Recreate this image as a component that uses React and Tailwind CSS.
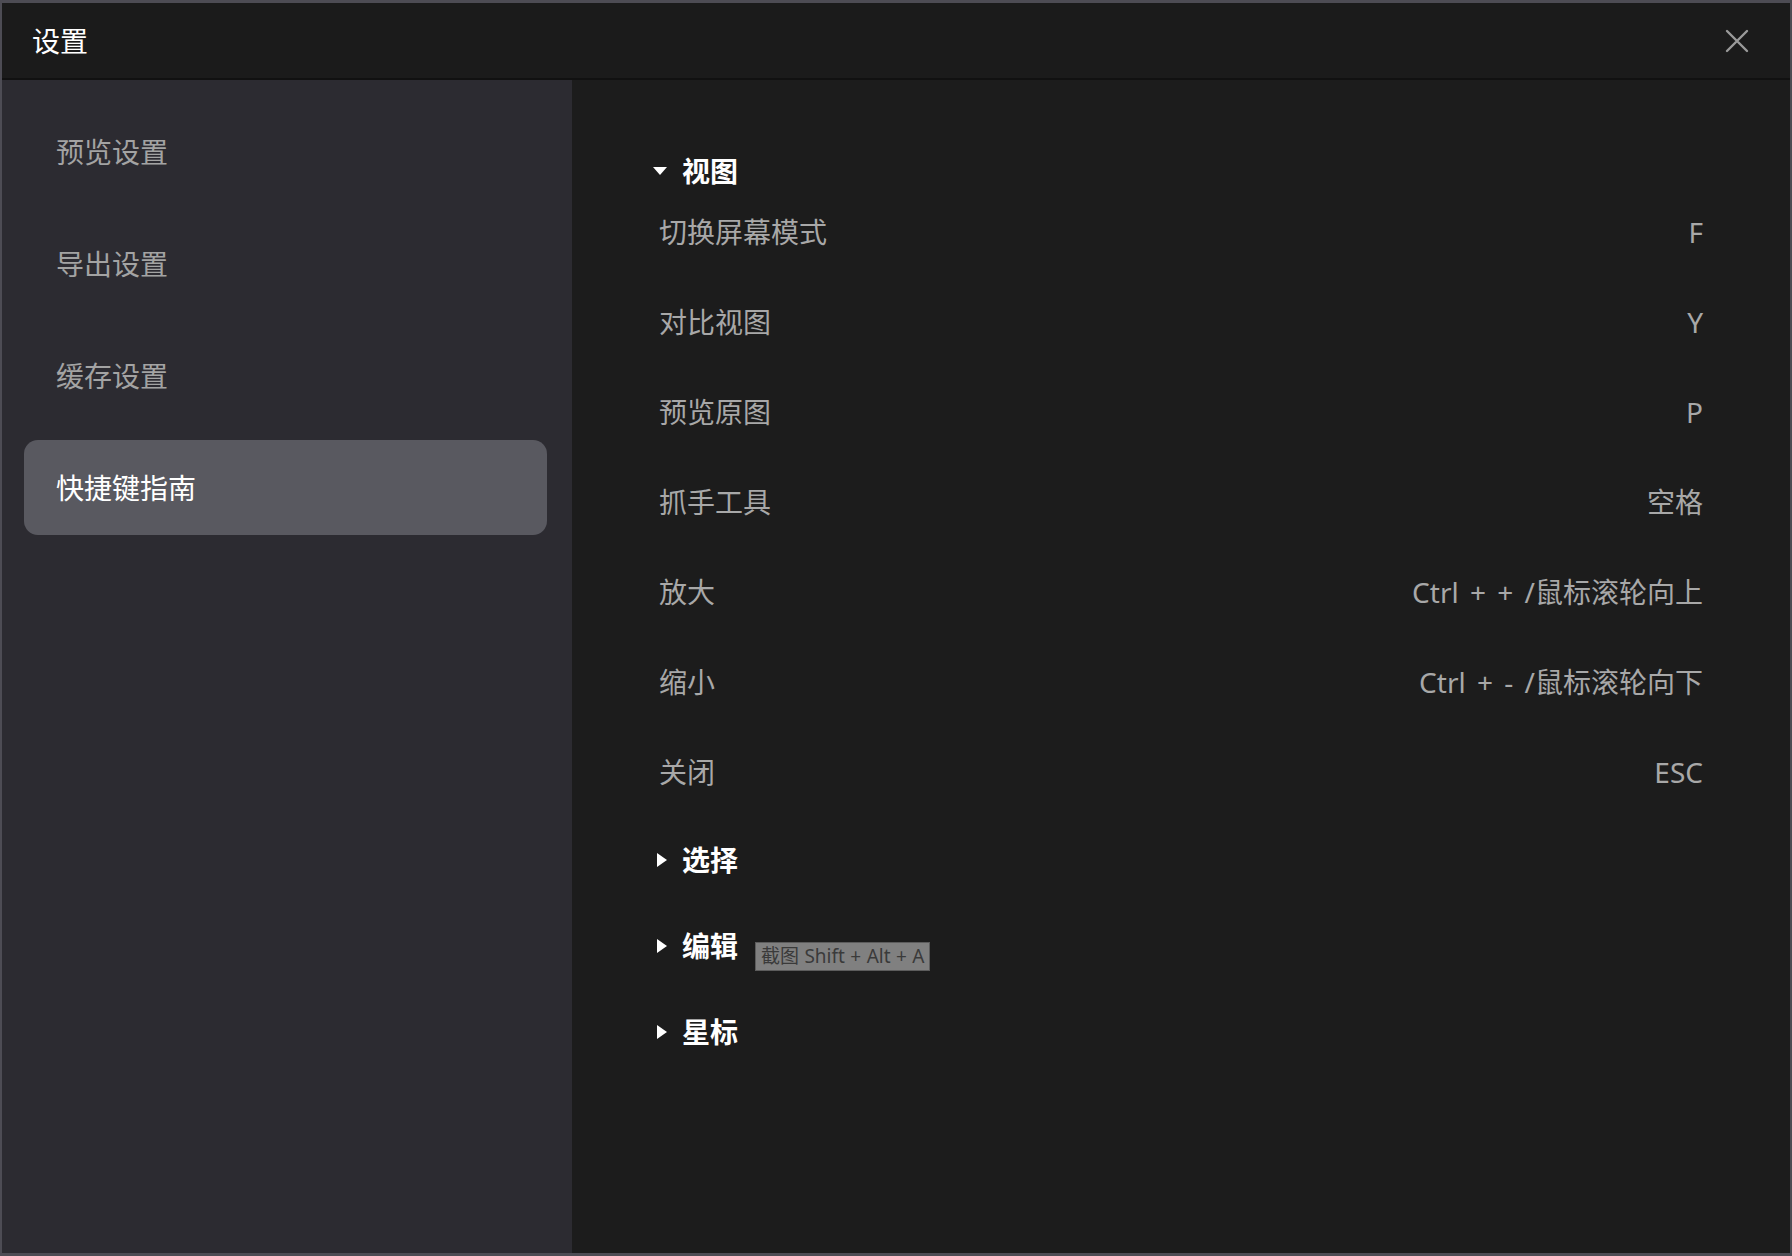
import React from "react";

const FONT = { fontFamily: '"Noto Sans", "Noto Sans CJK SC", sans-serif' };

const rows = [
  ["切换屏幕模式", "F"],
  ["对比视图", "Y"],
  ["预览原图", "P"],
  ["抓手工具", "空格"],
  ["放大", "Ctrl + + /鼠标滚轮向上"],
  ["缩小", "Ctrl + - /鼠标滚轮向下"],
  ["关闭", "ESC"],
];

function TriDown() {
  return (
    <svg width="16" height="10" viewBox="0 0 16 10" className="block">
      <path d="M1 1 L15 1 L8 9 Z" fill="#ffffff" />
    </svg>
  );
}

function TriRight() {
  return (
    <svg width="12" height="16" viewBox="0 0 12 16" className="block">
      <path d="M1 1 L11 8 L1 15 Z" fill="#ffffff" />
    </svg>
  );
}

function SectionHeader({ open, title, children }) {
  return (
    <div className="relative flex items-center h-[32px]">
      <div className="w-[30px] flex items-center">{open ? <TriDown /> : <div className="pl-[4px]"><TriRight /></div>}</div>
      <span className="text-[28px] font-bold text-white leading-none">{title}</span>
      {children}
    </div>
  );
}

export default function App() {
  const nav = ["预览设置", "导出设置", "缓存设置", "快捷键指南"];
  return (
    <div
      style={FONT}
      className="w-[1792px] h-[1256px] flex flex-col bg-[#1c1c1c] border-2 border-t-[3px] border-b-[3px] border-[#4d4c54] overflow-hidden"
    >
      {/* Title bar */}
      <div className="h-[77px] shrink-0 flex items-center justify-between pl-[30px] pr-[41px] bg-[#1b1b1b] border-b-2 border-[#111111]">
        <span className="text-[28px] text-white leading-none">设置</span>
        <svg width="24" height="24" viewBox="0 0 24 24" className="block">
          <path d="M2 2 L22 22 M22 2 L2 22" stroke="#9a9a9a" strokeWidth="2.4" strokeLinecap="round" />
        </svg>
      </div>

      {/* Body */}
      <div className="flex flex-1 min-h-0">
        <div className="w-[570px] shrink-0 bg-[#2c2b31] pt-[24px] pl-[22px] pr-[25px] flex flex-col gap-[17px]">
          {nav.map((n, i) => {
            const active = i === 3;
            return (
              <div
                key={n}
                className={
                  "h-[95px] rounded-[14px] flex items-center pl-[32px] text-[28px] leading-none " +
                  (active ? "bg-[#595960] text-white" : "text-[#a3a3a3]")
                }
              >
                {n}
              </div>
            );
          })}
        </div>

        <div className="flex-1 pt-[75px] pl-[80px] pr-[87px] flex flex-col">
          <SectionHeader open title="视图" />
          <div className="flex flex-col pl-[7px]">
            {rows.map(([k, v]) => (
              <div key={k} className="h-[90px] flex items-center justify-between text-[28px] leading-none text-[#a8a8a8]">
                <span>{k}</span>
                <span className="whitespace-pre [word-spacing:4px]">{v}</span>
              </div>
            ))}
          </div>
          <div className="h-[86px] flex items-center">
            <SectionHeader title="选择" />
          </div>
          <div className="h-[86px] flex items-center">
            <SectionHeader title="编辑">
              <div className="absolute left-[103px] top-[12px] h-[29px] px-[5px] flex items-center bg-[#808080] border border-[#5c5c5c] text-[19px] leading-none text-[#3a3a3a] whitespace-nowrap [word-spacing:0.5px]">
                截图 Shift + Alt + A
              </div>
            </SectionHeader>
          </div>
          <div className="h-[86px] flex items-center">
            <SectionHeader title="星标" />
          </div>
        </div>
      </div>
    </div>
  );
}
